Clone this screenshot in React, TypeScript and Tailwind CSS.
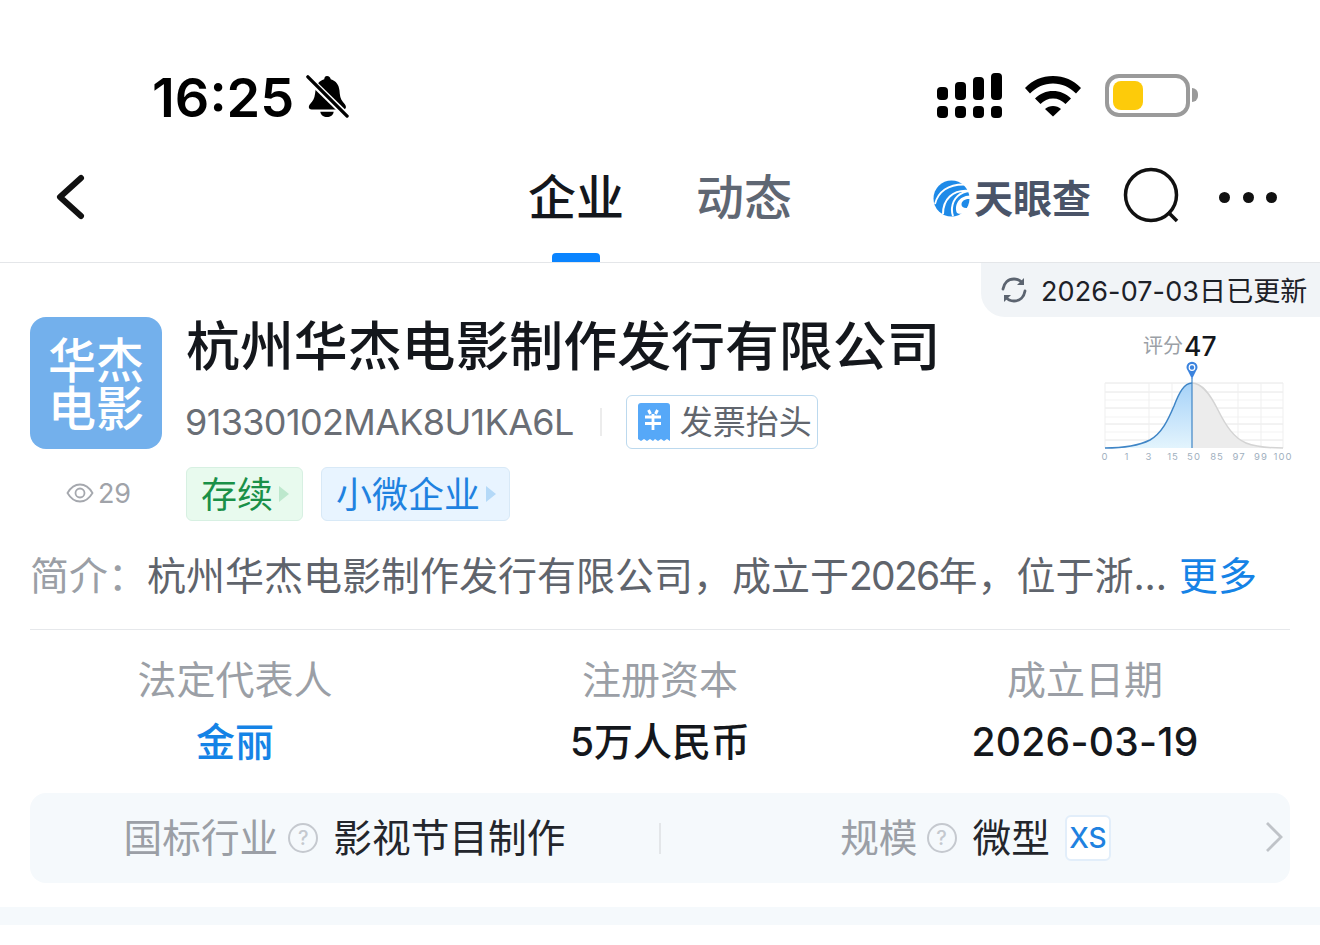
const cn = "font-['Inter','Noto_Sans_CJK_SC',sans-serif]";

function Bell() {
  return (
    <svg width="44" height="46" viewBox="0 0 46 46" className="ml-[11px]">
      <path d="M23 2c2.200 0 3.600 1.600 3.900 3.400C32.600 7 35.500 11.500 36 17c.4 5.500 1 9 3.500 12 1.800 2.200 3.300 3.800 3.300 5.500 0 1.500-1 2.500-3 2.500H7c-2 0-3-1-3-2.500 0-1.700 1.500-3.300 3.300-5.500C9.800 26 10.400 22.500 11 17c.5-5.500 3.400-10 9.100-11.600C20.400 3.600 20.800 2 23 2z" fill="#000" />
      <path d="M16 39.500h14c-.5 3.500-3.500 5.500-7 5.500s-6.500-2-7-5.500z" fill="#000" />
      <path d="M2 3l42 41" stroke="#fff" strokeWidth="7" />
      <path d="M3 3l41 41" stroke="#000" strokeWidth="3.500" strokeLinecap="round" />
    </svg>
  );
}

function Signal() {
  const cols = [13, 18, 23, 27];
  return (
    <div className="flex items-end gap-[7px]">
      {cols.map((h, i) => (
        <div key={i} className="flex w-[11px] flex-col gap-[6px]">
          <div className="rounded-[4px] bg-black" style={{ height: h }} />
          <div className="h-[12px] rounded-[4px] bg-black" />
        </div>
      ))}
    </div>
  );
}

function Wifi() {
  return (
    <svg width="58" height="43" viewBox="0 0 58 42">
      <path d="M1 13.500C8.500 5.500 18 1.500 29 1.500s20.500 4 28 12l-5 5.500C45.500 12.500 38 9 29 9s-16.500 3.500-23 10z" fill="#000" />
      <path d="M11 24C16 19 22 16.500 29 16.500S42 19 47 24l-5.500 5.500C38 26 34 24 29 24s-9 2-12.500 5.500z" fill="#000" />
      <path d="M21 34.500c2.200-2 5-3 8-3s5.800 1 8 3L29 42z" fill="#000" />
    </svg>
  );
}

function Battery() {
  return (
    <div className="flex items-center">
      <div className="flex h-[43px] w-[85px] items-center rounded-[14px] border-[4px] border-[#9a9a9a] px-[4px]">
        <div className="h-[29px] w-[30px] rounded-[8px] bg-[#fdcb0a]" />
      </div>
      <div className="ml-[2px] h-[14px] w-[6px] rounded-r-[6px] bg-[#9a9a9a]" />
    </div>
  );
}

function Logo() {
  return (
    <svg width="37" height="37" viewBox="0 0 37 37">
      <circle cx="18.500" cy="18.500" r="18" fill="#1e8ae8" />
      <path d="M2 24C5 12 15 4 32 4.500" fill="none" stroke="#fff" strokeWidth="1.800" />
      <path d="M10 34C10 20 19 9 37 11C27 12 20 18 19 28C18.700 31 19 33 20 36" fill="none" stroke="#fff" strokeWidth="2" />
      <path d="M24 33C21 26 25 16 37 15.500L37 19C32 18.500 28.500 21 28.500 24.500C28.500 27.500 32 29 36.500 27.500L33 32C30 34 27 34.500 24 33z" fill="#fff" />
    </svg>
  );
}

function Curve() {
  const xs = [15, 59, 82, 148, 171, 193];
  const labels: [number, string][] = [
    [15, "0"], [37, "1"], [59, "3"], [83, "15"], [104, "50"], [127, "85"], [149, "97"], [171, "99"], [193, "100"],
  ];
  const left = "M15 88C35 88 50 85 60 80C72 73 78 60 84 46C89 33 94 23 102 23";
  const right = "M102 23C112 23 120 34 128 50C136 66 144 78 156 83C166 87 178 88 193 88";
  return (
    <svg width="220" height="110" viewBox="0 0 220 110">
      <defs>
        <linearGradient id="blue" x1="0" y1="0" x2="0" y2="1">
          <stop offset="0" stopColor="#a6d2f8" />
          <stop offset="1" stopColor="#e3f4fd" />
        </linearGradient>
      </defs>
      {[23, 32, 48, 64, 80].map((y) => <line key={y} x1="15" x2="193" y1={y} y2={y} stroke="#e6e6e6" strokeWidth="1" />)}
      {[40, 57, 72].map((y) => <line key={y} x1="15" x2="193" y1={y} y2={y} stroke="#f3f3f3" strokeWidth="1" />)}
      {xs.map((x) => <line key={x} x1={x} x2={x} y1="23" y2="88" stroke="#efefef" strokeWidth="1" />)}
      <path d={`${right}L102 88Z`} fill="#ececec" />
      <path d={`${left}L102 88Z`} fill="url(#blue)" />
      <path d={right} fill="none" stroke="#d4d4d4" strokeWidth="1.500" />
      <path d={left} fill="none" stroke="#3f85c6" strokeWidth="1.500" />
      <line x1="102" x2="102" y1="18" y2="88" stroke="#3f85c6" strokeWidth="1.200" />
      <path d="M102 19l-4-8a5.500 5.500 0 1 1 8 0z" fill="#3b83de" />
      <circle cx="102" cy="7.500" r="2.800" fill="none" stroke="#fff" strokeWidth="1.200" />
      {labels.map(([x, t]) => (
        <text key={t} x={x} y="100" textAnchor="middle" fontSize="9.500" letterSpacing="1" fill="#9fb0c0" fontFamily="Inter, sans-serif">{t}</text>
      ))}
    </svg>
  );
}

function Help() {
  return (
    <span className="flex h-[30px] w-[30px] items-center justify-center rounded-full border-[2.500px] border-[#c5c9cf] text-[20px] font-medium leading-none text-[#c5c9cf]">?</span>
  );
}

function Tag({ text, color, bg, border, arrow }: { text: string; color: string; bg: string; border: string; arrow: string }) {
  return (
    <div className={`flex h-[54px] items-center rounded-[6px] border pl-[14px] pr-[13px] ${bg} ${border}`}>
      <span className={`mt-[2px] text-[36px] leading-none ${color}`}>{text}</span>
      <span className={`ml-[6px] h-0 w-0 border-y-[8px] border-l-[10px] border-y-transparent ${arrow}`} />
    </div>
  );
}

function Stat({ label, value, valueClass }: { label: string; value: string; valueClass: string }) {
  return (
    <div className="flex flex-col items-center">
      <div className="h-[50px] text-[39px] leading-[50px] text-[#9b9fa6]">{label}</div>
      <div className={`mt-[12px] h-[50px] text-[39px] font-medium leading-[50px] ${valueClass}`}>{value}</div>
    </div>
  );
}

export default function App() {
  return (
    <div className={`flex h-[945px] w-[1320px] flex-col overflow-hidden bg-white ${cn}`}>
      <div className="flex h-[150px] items-center justify-between pl-[152px] pr-[122px] pt-[40px]">
        <div className="mt-[2px] flex items-center">
          <span className="pt-[3px] text-[54px] font-semibold leading-none text-black">16:25</span>
          <Bell />
        </div>
        <div className="flex items-center">
          <Signal />
          <div className="ml-[22px]"><Wifi /></div>
          <div className="ml-[23px]"><Battery /></div>
        </div>
      </div>

      <div className="relative flex h-[113px] items-start border-b border-[#e4e6e9] pt-[20px]">
        <svg width="60" height="56" viewBox="0 0 60 56" className="ml-[40px]">
          <path d="M41 8L20 27l21 19" fill="none" stroke="#111" strokeWidth="6" strokeLinecap="round" strokeLinejoin="round" />
        </svg>
        <div className="ml-[428px] flex h-[56px] w-[264px] items-center gap-[72px] whitespace-nowrap text-[48px] font-medium leading-none">
          <span className="text-[#14171c]">企业</span>
          <span className="text-[#5f6773]">动态</span>
        </div>
        <div className="ml-[141px] flex h-[56px] w-[159px] items-center">
          <Logo />
          <span className="ml-[4px] whitespace-nowrap text-[39px] font-bold leading-none text-[#4a5468]">天眼查</span>
        </div>
        <svg width="62" height="62" viewBox="0 0 62 62" className="ml-[29px] -mt-[4px]">
          <circle cx="30" cy="29" r="25.500" fill="none" stroke="#111" strokeWidth="3.500" />
          <path d="M47 46l9 9" fill="none" stroke="#111" strokeWidth="3.500" />
        </svg>
        <div className="ml-[36px] -mt-[1px] flex h-[56px] items-center gap-[12.500px]">
          <span className="h-[11px] w-[11px] rounded-full bg-[#111]" />
          <span className="h-[11px] w-[11px] rounded-full bg-[#111]" />
          <span className="h-[11px] w-[11px] rounded-full bg-[#111]" />
        </div>
        <div className="absolute bottom-0 left-[552px] h-[9px] w-[48px] rounded-t-[4px] bg-[#0a84ff]" />
      </div>

      <div className="flex justify-end">
        <div className="flex h-[54px] w-[339px] items-center rounded-bl-[24px] bg-[#f1f4f7] pl-[19px]">
          <svg width="28" height="28" viewBox="0 0 28 28">
            <path d="M3 13C4 7 8 3 14 3c3.500 0 6.500 1.500 8.500 4" fill="none" stroke="#5c6470" strokeWidth="2.800" strokeLinecap="round" />
            <path d="M25 15c-1 6-5 10-11 10-3.500 0-6.500-1.500-8.500-4" fill="none" stroke="#5c6470" strokeWidth="2.800" strokeLinecap="round" />
            <path d="M24 2v7h-7z" fill="#5c6470" />
            <path d="M4 26v-7h7z" fill="#5c6470" />
          </svg>
          <span className="ml-[13px] mt-[2px] whitespace-nowrap text-[27px] leading-none tracking-[0.1px] text-[#1d2128]">2026-07-03日已更新</span>
        </div>
      </div>

      <div className="flex px-[30px]">
        <div className="flex w-[132px] flex-col items-center">
          <div className="flex h-[132px] w-[132px] items-center justify-center rounded-[16px] bg-[#73b0ec] px-[18px] pt-[4px] text-center text-[48px] font-medium leading-[48px] text-white">
            华杰电影
          </div>
          <div className="ml-[4px] mt-[28px] flex h-[32px] items-center">
            <svg width="28" height="20" viewBox="0 0 28 20" className="ml-[1px]">
              <path d="M1.500 10C5 4 9 1.500 14 1.500S23 4 26.500 10C23 16 19 18.500 14 18.500S5 16 1.500 10z" fill="none" stroke="#a5a8ae" strokeWidth="1.800" />
              <circle cx="14" cy="10" r="4.500" fill="none" stroke="#a5a8ae" strokeWidth="1.800" />
            </svg>
            <span className="ml-[4px] text-[27px] leading-none text-[#a0a3a9]">29</span>
          </div>
        </div>

        <div className="ml-[24px] flex flex-col">
          <div className="h-[60px] whitespace-nowrap text-[53.900px] font-medium leading-[60px] text-[#14171c]">杭州华杰电影制作发行有限公司</div>
          <div className="mt-[18px] flex h-[54px] items-center">
            <span className="-ml-[1px] text-[36px] leading-none tracking-[-0.65px] text-[#6a6e75]">91330102MAK8U1KA6L</span>
            <span className="ml-[26px] h-[28px] w-[2px] bg-[#ececec]" />
            <div className="ml-[24px] flex h-[54px] w-[192px] items-center rounded-[6px] border border-[#bcd9ee] pl-[9px]">
              <svg width="34" height="38" viewBox="0 0 34 38">
                <path d="M3 0h28a3 3 0 0 1 3 3v35l-3-2-3 2-3-2-3 2-3-2-2 2-3-2-3 2-3-2-3 2-3-2V3a3 3 0 0 1 3-3z" fill="#56a8f8" />
                <path d="M12.500 7l2 4M21.500 7l-2 4M9 14h16M9 20.500h16M17 11v16" fill="none" stroke="#fff" strokeWidth="2.800" />
              </svg>
              <span className="ml-[10px] whitespace-nowrap text-[33px] leading-none text-[#61666e]">发票抬头</span>
            </div>
          </div>
          <div className="mt-[18px] flex gap-[18px]">
            <Tag text="存续" color="text-[#1a9048]" bg="bg-[#e8faee]" border="border-[#d7f0e2]" arrow="border-l-[#bde8cd]" />
            <Tag text="小微企业" color="text-[#1f82e0]" bg="bg-[#e8f4ff]" border="border-[#d8e9f7]" arrow="border-l-[#b4d9f8]" />
          </div>
        </div>

        <div className="ml-[auto] -mr-[20px] flex w-[220px] flex-col">
          <div className="flex h-[43px] items-end justify-start pl-[53px]">
            <span className="text-[20px] leading-[28px] text-[#9b9fa6]">评分</span>
            <span className="ml-[1px] mt-[1px] text-[26.500px] font-medium leading-[28px] text-[#14171c]">47</span>
          </div>
          <Curve />
        </div>
      </div>

      <div className="mt-[2px] flex h-[106px] items-center whitespace-nowrap px-[30px] pb-[2px] text-[39px] leading-none">
        <span className="w-[117px] text-[#9b9fa6]">{"简介\uFF1A"}</span>
        <span className="text-[#5f646c]">
          {"杭州华杰电影制作发行有限公司\uFF0C成立于"}
          <span className="tracking-[-1.75px]">2026</span>
          {"年\uFF0C位于浙..."}
        </span>
        <span className="ml-[12px] text-[#1583e6]">更多</span>
      </div>

      <div className="mx-[30px] h-px bg-[#e6e8eb]" />

      <div className="mx-[30px] mt-[25px] grid grid-cols-3 gap-[15px]">
        <Stat label="法定代表人" value="金丽" valueClass="text-[#1583e6]" />
        <Stat label="注册资本" value="5万人民币" valueClass="text-[#14171c]" />
        <Stat label="成立日期" value="2026-03-19" valueClass="text-[#14171c] tracking-[0.3px]" />
      </div>

      <div className="relative mx-[30px] mt-[26px] grid h-[90px] grid-cols-[1fr_2px_1fr] items-center rounded-[16px] bg-[#f5f9fc]">
        <div className="flex items-center justify-center">
          <span className="text-[38.700px] leading-none text-[#9b9fa6]">国标行业</span>
          <span className="ml-[10px]"><Help /></span>
          <span className="ml-[15px] text-[38.700px] leading-none text-[#23262c]">影视节目制作</span>
        </div>
        <div className="h-[31px] w-[2px] bg-[#e3e6e9]" />
        <div className="flex items-center justify-center">
          <span className="text-[38.700px] leading-none text-[#9b9fa6]">规模</span>
          <span className="ml-[9px]"><Help /></span>
          <span className="ml-[16px] text-[38.700px] leading-none text-[#23262c]">微型</span>
          <span className="ml-[15px] flex h-[46px] w-[46px] items-center justify-center rounded-[6px] border-2 border-[#e2eefa] bg-white text-[28px] font-medium leading-none text-[#1f82e0]">XS</span>
        </div>
        <svg width="20" height="32" viewBox="0 0 20 32" className="absolute right-[6px] top-[28px]">
          <path d="M3 2l14 14L3 30" fill="none" stroke="#bfc3c8" strokeWidth="2.800" />
        </svg>
      </div>

      <div className="mt-[24px] h-[18px] bg-[#f5f9fc]" />
    </div>
  );
}
